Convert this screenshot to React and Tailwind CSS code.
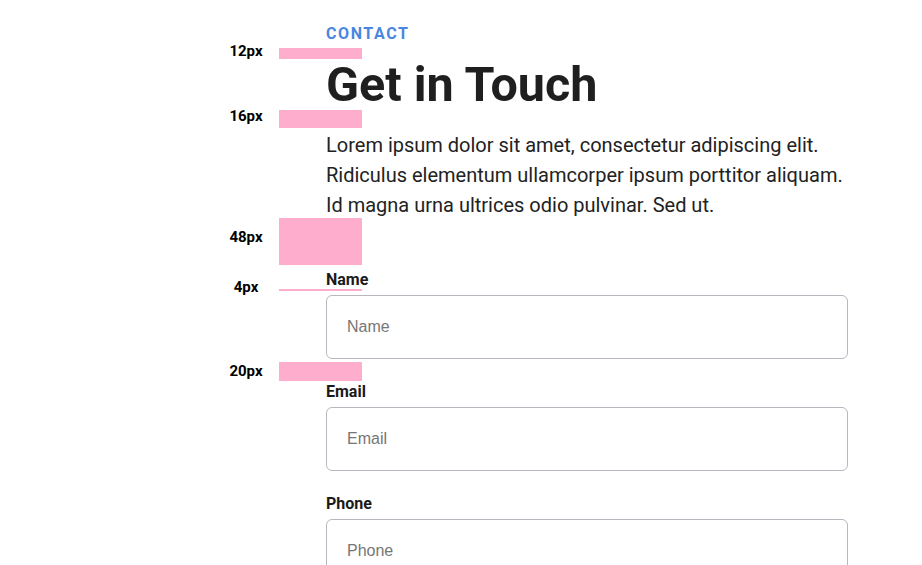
const notes = [
  { label: '12px', top: 48, h: 11, mid: 51 },
  { label: '16px', top: 110, h: 18, mid: 116 },
  { label: '48px', top: 218, h: 47, mid: 237 },
  { label: '4px', top: 289, h: 2, mid: 287 },
  { label: '20px', top: 362, h: 19, mid: 371 },
];

const fields = ['Name', 'Email', 'Phone'];

const Field = ({ name }) => (
  <div className="flex flex-col gap-[3px]">
    <label className="text-base leading-6 font-bold text-[#1a1a1a]">{name}</label>
    <input
      type="text"
      placeholder={name}
      className="h-16 w-full rounded-md border border-[#b7b7bf] bg-white px-5 pb-[1px] font-['Liberation_Sans',Arial,sans-serif] text-base text-[#222] placeholder:text-[#767676] outline-none"
    />
  </div>
);

export default function App() {
  return (
    <div className="relative min-h-screen bg-white font-['Roboto',sans-serif]">
      {/* spacing annotations */}
      {notes.map((n) => (
        <div key={n.label}>
          <span
            className="absolute left-[221px] w-[50px] text-center text-[15px] leading-5 font-bold text-black"
            style={{ top: n.mid - 10 }}
          >
            {n.label}
          </span>
          <div
            className="absolute left-[279px] w-[83px] bg-[#ffadcc]"
            style={{ top: n.top, height: n.h }}
          />
        </div>
      ))}

      <section className="ml-[326px] w-[522px] pt-[22px]">
        <p className="text-base leading-6 font-bold tracking-[0.1em] text-[#4a86e0]">CONTACT</p>
        <h1 className="mt-[15px] text-[48.5px] leading-[48px] font-bold text-[#1f1f1f]">Get in Touch</h1>
        <p className="mt-[21px] text-xl leading-[30px] text-[#222]">
          Lorem ipsum dolor sit amet, consectetur adipiscing elit. Ridiculus elementum ullamcorper ipsum porttitor aliquam. Id magna urna ultrices odio pulvinar. Sed ut.
        </p>

        <form className="mt-[48px] flex flex-col gap-[21px]">
          {fields.map((f) => (
            <Field key={f} name={f} />
          ))}
        </form>
      </section>
    </div>
  );
}
